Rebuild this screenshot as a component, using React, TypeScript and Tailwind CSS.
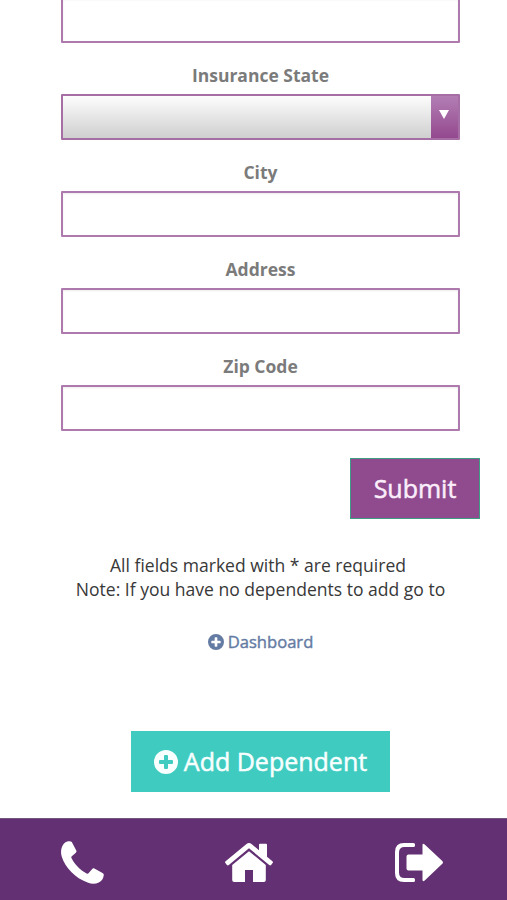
type FieldProps = {
  id: string;
  label: string;
};

const fieldBox =
  "block h-[46px] w-full rounded-[1px] border-2 border-[#ae7aae] bg-white px-3 shadow-[inset_0_1px_2px_rgba(0,0,0,0.08)] outline-none";

function FieldLabel({ id, label }: FieldProps) {
  return (
    <label
      htmlFor={id}
      className="flex h-[51px] items-center justify-center pt-[13px] text-[17.500px] leading-6 font-bold text-[#7b7b7b]"
    >
      {label}
    </label>
  );
}

function TextField({ id, label }: FieldProps) {
  return (
    <div>
      <FieldLabel id={id} label={label} />
      <input id={id} type="text" className={fieldBox} />
    </div>
  );
}

function StateSelect() {
  return (
    <div>
      <FieldLabel id="state" label="Insurance State" />
      <button
        id="state"
        type="button"
        className="flex h-[46px] w-full rounded-[1px] border-2 border-[#a56fa6] bg-linear-to-b from-white to-[#cdcdcd] bg-origin-border"
      >
        <span className="flex-1" />
        <span className="flex h-full w-[27px] justify-center bg-linear-to-b from-[#b27eb4] to-[#94498f] pt-[14px]">
          <svg width="10" height="9" viewBox="0 0 10 9" fill="white" className="mr-px">
            <path d="M0 0h10L5 9z" />
          </svg>
        </span>
      </button>
    </div>
  );
}

function PlusCircle({ className }: { className: string }) {
  return (
    <svg viewBox="0 0 24 24" fill="currentColor" className={className}>
      <path
        fillRule="evenodd"
        d="M12 0a12 12 0 1 1 0 24a12 12 0 0 1 0-24zM11 5q-1 0-1 1v4H6q-1 0-1 1v2q0 1 1 1h4v4q0 1 1 1h2q1 0 1-1v-4h4q1 0 1-1v-2q0-1-1-1h-4V6q0-1-1-1z"
      />
    </svg>
  );
}

function PhoneIcon() {
  return (
    <svg width="43" height="43" viewBox="0 0 43 43" fill="currentColor">
      <path d="M7.2.3C8.6 0 10 .1 10.8 1L15.4 9.700C15.800 10.700 15.200 11.400 14.300 12.200L10.800 15.200C10.100 15.900 10.200 16.500 10.600 17.300C13.600 23.300 19 29.200 25.600 32.400C26.500 32.800 27 32.700 27.700 32L31.200 28C31.900 27.200 32.600 27.200 33.400 27.600L41.500 32C42.600 32.600 42.900 33.300 42.700 34.600C42.300 38 40.700 40.300 37.800 41.600C34.200 43.200 30.600 43.200 26.600 41.600C14.200 37 4.300 26.800.7 15.500C-.5 11.500 0 7.300 1.800 4.200C3 2 4.900.9 7.200.3z" />
    </svg>
  );
}

function HomeIcon() {
  return (
    <svg width="48" height="39" viewBox="0 0 48 39" fill="currentColor">
      <path d="M24 8.200L40.800 22v15q0 2-2 2H28V27h-8v12H9.200q-2 0-2-2V22z" />
      <path d="M21.500 1q2.500-2 5 0l7.500 6.200V1.800Q34 .8 35 .8h6q1 0 1 1v12l5.400 4.500q1 .8.200 1.800l-1.500 1.900q-.8.900-1.900.1L24 5.200L3.800 22.100q-1.100.8-1.900-.1L.4 20.100q-.8-1 .2-1.800z" />
    </svg>
  );
}

function SignOutIcon() {
  return (
    <svg width="48" height="39" viewBox="0 0 48 39" fill="currentColor">
      <path d="M9 0h9.500q1.500 0 1.500 1.500v1q0 1.500-1.500 1.500H9.500Q4 4 4 9.500v20Q4 35 9.500 35h9q1.500 0 1.500 1.500v1q0 1.500-1.500 1.500H9q-9 0-9-9V9q0-9 9-9z" />
      <path d="M27.500 2.300q0-2.500 2.200-.7L47.300 18q1.300 1.400 0 2.800L29.700 37.500q-2.200 1.800-2.200-.7v-9.300h-14q-2 0-2-2v-12q0-2 2-2h14z" />
    </svg>
  );
}

export default function App() {
  return (
    <div className="flex h-[900px] w-full flex-col overflow-hidden bg-white font-['Open_Sans',sans-serif]">
      <form className="-mt-[3px] pr-[47px] pl-[61px]" onSubmit={(e) => e.preventDefault()}>
        <input type="text" aria-label="Insurance" className={fieldBox} />
        <StateSelect />
        <TextField id="city" label="City" />
        <TextField id="address" label="Address" />
        <TextField id="zip" label="Zip Code" />
        <div className="-mr-5 mt-[27px] flex justify-end">
          <button
            type="submit"
            className="h-[61px] w-[130px] border border-[#3f9b84] bg-[#904a8e] text-[25px] text-[#fbeefb] [-webkit-text-stroke:0.5px]"
          >
            Submit
          </button>
        </div>
      </form>

      <div className="mt-[34px] flex flex-col items-center text-[17.550px] leading-6 whitespace-nowrap text-[#383838]">
        <p className="pl-[9px]">All fields marked with * are required</p>
        <p className="pl-[14px]">Note: If you have no dependents to add go to</p>
        <a
          href="#"
          className="mt-[29px] flex items-center gap-1 pl-[14px] text-[16.600px] text-[#647ba3] [-webkit-text-stroke:0.4px]"
        >
          <PlusCircle className="size-4" />
          Dashboard
        </a>
      </div>

      <button
        type="button"
        className="mt-[77px] ml-[131px] flex h-[61px] w-[259px] shrink-0 items-center justify-center gap-1.5 bg-[#40cbc0] text-[25px] whitespace-nowrap text-[#f7ffff] [-webkit-text-stroke:0.5px]"
      >
        <PlusCircle className="size-6" />
        Add Dependent
      </button>

      <nav className="mt-auto flex h-[82px] shrink-0 items-center border-t border-[#73547d] bg-[#633073] pt-[6px] text-white">
        <a href="#" aria-label="Call" className="flex w-[164px] justify-center">
          <PhoneIcon />
        </a>
        <a href="#" aria-label="Home" className="flex w-[170px] justify-center">
          <HomeIcon />
        </a>
        <a href="#" aria-label="Sign out" className="flex w-[170px] justify-center">
          <SignOutIcon />
        </a>
      </nav>
    </div>
  );
}
